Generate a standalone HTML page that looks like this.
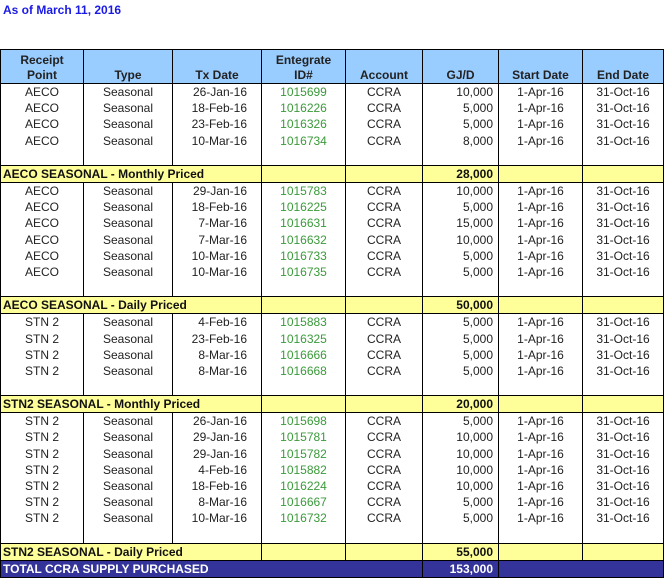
<!DOCTYPE html>
<html><head><meta charset="utf-8"><style>
body{margin:0;background:#fff;width:666px;height:577px;overflow:hidden;font-family:"Liberation Sans",Arial,sans-serif;}
.title{position:absolute;left:3px;top:3px;font-size:12px;font-weight:bold;color:#1a1ae6;}
table{position:absolute;left:0;top:49px;border-collapse:collapse;table-layout:fixed;font-size:12px;color:#222;}
td{padding:0 2px;white-space:nowrap;overflow:hidden;line-height:14px;border-left:1px solid #000;border-right:1px solid #000;}
tr.h td{background:#99ccff;font-weight:bold;text-align:center;vertical-align:bottom;height:33px;border:1px solid #000;line-height:15px;}
tr.d td{height:16.2px;text-align:center;padding:0 2px;}
tr.d td.g{color:#3a9a3a;}
tr.d td.r{text-align:right;padding-right:5px;}
tr.d td.x{text-align:right;padding-right:14px;}
tr.y td{background:#ffff99;font-weight:bold;height:16px;border:1px solid #000;color:#111;}
tr.t td{background:#333399;color:#fff;font-weight:bold;height:16px;border:1px solid #000;}
.r{text-align:right;padding-right:5px;}
</style></head><body>
<div class="title">As of March 11, 2016</div>
<table>
<colgroup><col style="width:83px"><col style="width:89px"><col style="width:89px"><col style="width:84px"><col style="width:77px"><col style="width:76px"><col style="width:84px"><col style="width:81px"></colgroup>
<tr class="h"><td>Receipt<br>Point</td><td>Type</td><td>Tx Date</td><td>Entegrate<br>ID#</td><td>Account</td><td>GJ/D</td><td>Start Date</td><td>End Date</td></tr>
<tr class="d"><td>AECO</td><td>Seasonal</td><td class="x">26-Jan-16</td><td class="g">1015699</td><td>CCRA</td><td class="r">10,000</td><td>1-Apr-16</td><td>31-Oct-16</td></tr>
<tr class="d"><td>AECO</td><td>Seasonal</td><td class="x">18-Feb-16</td><td class="g">1016226</td><td>CCRA</td><td class="r">5,000</td><td>1-Apr-16</td><td>31-Oct-16</td></tr>
<tr class="d"><td>AECO</td><td>Seasonal</td><td class="x">23-Feb-16</td><td class="g">1016326</td><td>CCRA</td><td class="r">5,000</td><td>1-Apr-16</td><td>31-Oct-16</td></tr>
<tr class="d"><td>AECO</td><td>Seasonal</td><td class="x">10-Mar-16</td><td class="g">1016734</td><td>CCRA</td><td class="r">8,000</td><td>1-Apr-16</td><td>31-Oct-16</td></tr>
<tr class="d"><td></td><td></td><td></td><td></td><td></td><td></td><td></td><td></td></tr>
<tr class="y"><td colspan="3">AECO SEASONAL - Monthly Priced</td><td></td><td></td><td class="r">28,000</td><td></td><td></td></tr>
<tr class="d"><td>AECO</td><td>Seasonal</td><td class="x">29-Jan-16</td><td class="g">1015783</td><td>CCRA</td><td class="r">10,000</td><td>1-Apr-16</td><td>31-Oct-16</td></tr>
<tr class="d"><td>AECO</td><td>Seasonal</td><td class="x">18-Feb-16</td><td class="g">1016225</td><td>CCRA</td><td class="r">5,000</td><td>1-Apr-16</td><td>31-Oct-16</td></tr>
<tr class="d"><td>AECO</td><td>Seasonal</td><td class="x">7-Mar-16</td><td class="g">1016631</td><td>CCRA</td><td class="r">15,000</td><td>1-Apr-16</td><td>31-Oct-16</td></tr>
<tr class="d"><td>AECO</td><td>Seasonal</td><td class="x">7-Mar-16</td><td class="g">1016632</td><td>CCRA</td><td class="r">10,000</td><td>1-Apr-16</td><td>31-Oct-16</td></tr>
<tr class="d"><td>AECO</td><td>Seasonal</td><td class="x">10-Mar-16</td><td class="g">1016733</td><td>CCRA</td><td class="r">5,000</td><td>1-Apr-16</td><td>31-Oct-16</td></tr>
<tr class="d"><td>AECO</td><td>Seasonal</td><td class="x">10-Mar-16</td><td class="g">1016735</td><td>CCRA</td><td class="r">5,000</td><td>1-Apr-16</td><td>31-Oct-16</td></tr>
<tr class="d"><td></td><td></td><td></td><td></td><td></td><td></td><td></td><td></td></tr>
<tr class="y"><td colspan="3">AECO SEASONAL - Daily Priced</td><td></td><td></td><td class="r">50,000</td><td></td><td></td></tr>
<tr class="d"><td>STN 2</td><td>Seasonal</td><td class="x">4-Feb-16</td><td class="g">1015883</td><td>CCRA</td><td class="r">5,000</td><td>1-Apr-16</td><td>31-Oct-16</td></tr>
<tr class="d"><td>STN 2</td><td>Seasonal</td><td class="x">23-Feb-16</td><td class="g">1016325</td><td>CCRA</td><td class="r">5,000</td><td>1-Apr-16</td><td>31-Oct-16</td></tr>
<tr class="d"><td>STN 2</td><td>Seasonal</td><td class="x">8-Mar-16</td><td class="g">1016666</td><td>CCRA</td><td class="r">5,000</td><td>1-Apr-16</td><td>31-Oct-16</td></tr>
<tr class="d"><td>STN 2</td><td>Seasonal</td><td class="x">8-Mar-16</td><td class="g">1016668</td><td>CCRA</td><td class="r">5,000</td><td>1-Apr-16</td><td>31-Oct-16</td></tr>
<tr class="d"><td></td><td></td><td></td><td></td><td></td><td></td><td></td><td></td></tr>
<tr class="y"><td colspan="3">STN2 SEASONAL - Monthly Priced</td><td></td><td></td><td class="r">20,000</td><td></td><td></td></tr>
<tr class="d"><td>STN 2</td><td>Seasonal</td><td class="x">26-Jan-16</td><td class="g">1015698</td><td>CCRA</td><td class="r">5,000</td><td>1-Apr-16</td><td>31-Oct-16</td></tr>
<tr class="d"><td>STN 2</td><td>Seasonal</td><td class="x">29-Jan-16</td><td class="g">1015781</td><td>CCRA</td><td class="r">10,000</td><td>1-Apr-16</td><td>31-Oct-16</td></tr>
<tr class="d"><td>STN 2</td><td>Seasonal</td><td class="x">29-Jan-16</td><td class="g">1015782</td><td>CCRA</td><td class="r">10,000</td><td>1-Apr-16</td><td>31-Oct-16</td></tr>
<tr class="d"><td>STN 2</td><td>Seasonal</td><td class="x">4-Feb-16</td><td class="g">1015882</td><td>CCRA</td><td class="r">10,000</td><td>1-Apr-16</td><td>31-Oct-16</td></tr>
<tr class="d"><td>STN 2</td><td>Seasonal</td><td class="x">18-Feb-16</td><td class="g">1016224</td><td>CCRA</td><td class="r">10,000</td><td>1-Apr-16</td><td>31-Oct-16</td></tr>
<tr class="d"><td>STN 2</td><td>Seasonal</td><td class="x">8-Mar-16</td><td class="g">1016667</td><td>CCRA</td><td class="r">5,000</td><td>1-Apr-16</td><td>31-Oct-16</td></tr>
<tr class="d"><td>STN 2</td><td>Seasonal</td><td class="x">10-Mar-16</td><td class="g">1016732</td><td>CCRA</td><td class="r">5,000</td><td>1-Apr-16</td><td>31-Oct-16</td></tr>
<tr class="d"><td></td><td></td><td></td><td></td><td></td><td></td><td></td><td></td></tr>
<tr class="y"><td colspan="3">STN2 SEASONAL - Daily Priced</td><td></td><td></td><td class="r">55,000</td><td></td><td></td></tr>
<tr class="t"><td colspan="5">TOTAL CCRA SUPPLY PURCHASED</td><td class="r">153,000</td><td colspan="2"></td></tr>
</table>
</body></html>
